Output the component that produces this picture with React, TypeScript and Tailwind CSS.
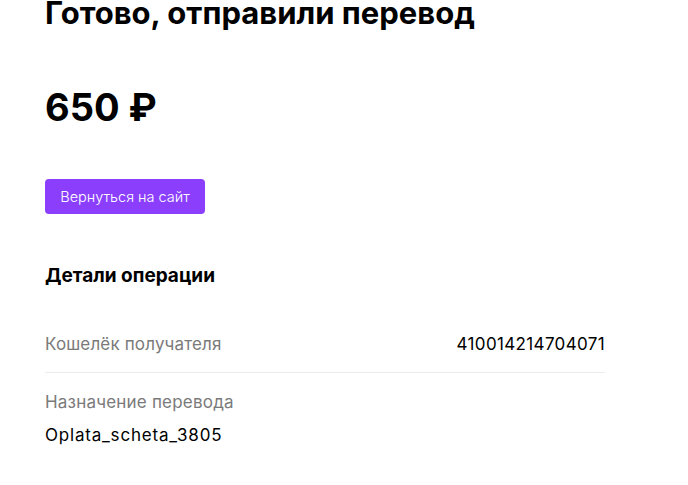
export default function App() {
  return (
    <div className="w-[688px] h-[485px] bg-white overflow-hidden" style={{ fontFamily: "Inter, 'Noto Sans', sans-serif" }}>
      <div className="pl-[45px] w-[605px]">
        <h1 className="text-[31px] leading-[36px] font-bold text-black -mt-[5px] whitespace-nowrap">Готово, отправили перевод</h1>
        <div className="mt-[52px] text-[38px] leading-[48px] font-bold text-black">650 ₽</div>
        <button className="mt-[48px] h-[35px] w-[160px] rounded-[4px] bg-[#8b3ffd] text-white text-[14.5px] font-light flex items-center justify-center">Вернуться на сайт</button>
        <div className="mt-[50px] text-[19px] leading-[24px] font-bold text-black">Детали операции</div>
        <div className="mt-[44px] flex justify-between items-center text-[17px] leading-[24px] pb-[16px] border-b border-[#ebebeb]">
          <span className="text-[#7a7a7a] tracking-[0.15px]">Кошелёк получателя</span>
          <span className="text-black tracking-[0.35px]">410014214704071</span>
        </div>
        <div className="mt-[17px] text-[17px] leading-[24px] text-[#7a7a7a] tracking-[0.2px]">Назначение перевода</div>
        <div className="mt-[9px] text-[17px] leading-[24px] text-black tracking-[0.8px]">Oplata_scheta_3805</div>
      </div>
    </div>
  );
}
